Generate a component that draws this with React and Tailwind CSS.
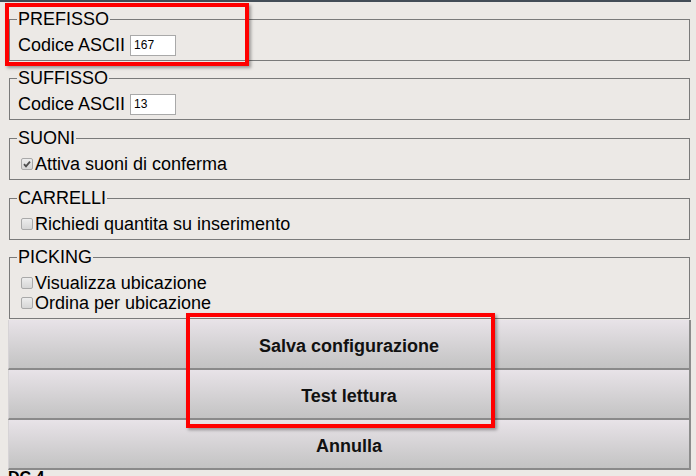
import React from 'react';

const Box = ({ checked }) => (
  <span className="inline-flex items-center justify-center w-[12px] h-[12px] rounded-[2px] border border-[#a9a9a9] bg-linear-to-b from-[#ededed] to-[#d6d6d6] ml-[4px] mr-[2px]">
    {checked && (
      <svg width="10" height="10" viewBox="0 0 10 10">
        <path d="M2 5.2 L4 7.4 L8 2.6" fill="none" stroke="#4d4d4d" strokeWidth="1.8" />
      </svg>
    )}
  </span>
);

const Group = ({ title, className = '', children }) => (
  <fieldset className={`ml-[9px] mr-[1px] border border-[#7a7a7a] pl-[7px] pb-[5px] ${className}`}>
    <legend className="px-[1px] text-[18px] leading-[20px] text-black">{title}</legend>
    {children}
  </fieldset>
);

const AsciiRow = ({ value }) => (
  <div className="flex items-center h-[24px] mt-[4px] mb-[-2px] ml-[1px] text-[18px] text-black">
    <span>Codice ASCII</span>
    <input
      type="text"
      defaultValue={value}
      className="ml-[5px] w-[46px] h-[21px] border border-[#a9a9a9] bg-white px-[3px] text-[12px] text-black outline-none"
    />
  </div>
);

const CheckRow = ({ label, checked }) => (
  <div className="flex items-center h-[20px] text-[18px] text-black">
    <Box checked={checked} />
    <span>{label}</span>
  </div>
);

const Btn = ({ children }) => (
  <button className="block w-[683px] h-[50px] ml-[8px] border-l border-l-[#d6d3d6] border-r-2 border-b-2 border-r-[#8c8c8c] border-b-[#8a8a8a] bg-linear-to-b from-[#e8e3e8] to-[#c3c3c3] text-[18px] font-bold text-[#111] pt-[5px]">
    {children}
  </button>
);

export default function App() {
  return (
    <div className="relative w-[696px] h-[476px] overflow-hidden bg-[#ece9e6] font-['Liberation_Sans',Arial,sans-serif]">
      <div className="w-[691px]">
        <div className="h-[2px] bg-[#434d57]" />
        <Group title="PREFISSO" className="mt-[7px]">
          <AsciiRow value="167" />
        </Group>
        <Group title="SUFFISSO" className="mt-[7px]">
          <AsciiRow value="13" />
        </Group>
        <Group title="SUONI" className="mt-[8px]">
          <div className="pt-[6px]">
            <CheckRow label="Attiva suoni di conferma" checked />
          </div>
        </Group>
        <Group title="CARRELLI" className="mt-[8px]">
          <div className="pt-[6px]">
            <CheckRow label="Richiedi quantita su inserimento" />
          </div>
        </Group>
        <Group title="PICKING" className="mt-[7px]">
          <div className="pt-[6px]">
            <CheckRow label="Visualizza ubicazione" />
            <CheckRow label="Ordina per ubicazione" />
          </div>
        </Group>
        <div className="mt-[1px]">
          <Btn>Salva configurazione</Btn>
          <Btn>Test lettura</Btn>
          <Btn>Annulla</Btn>
        </div>
        <div className="ml-[8px] text-[16px] leading-[16px] font-bold text-black">DC 4</div>
      </div>

      <div className="absolute left-[5px] top-[3px] w-[244px] h-[63px] border-4 border-[#ff0000] shadow-[2px_2px_3px_rgba(0,0,0,0.35)]" />
      <div className="absolute left-[186px] top-[313px] w-[309px] h-[115px] border-4 border-[#ff0000] shadow-[2px_2px_3px_rgba(0,0,0,0.35)]" />
    </div>
  );
}
